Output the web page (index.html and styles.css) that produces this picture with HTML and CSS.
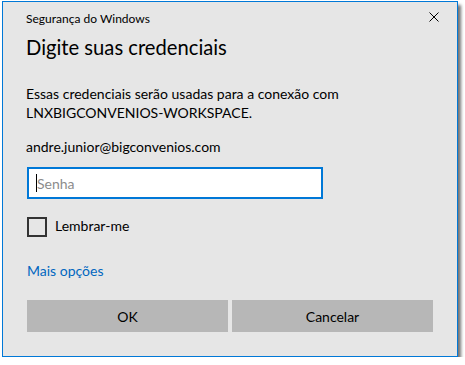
FILE: index.html
```html
<!DOCTYPE html>
<html>
  <head>
    <meta charset="utf-8">
    <link rel="stylesheet" href="styles.css">
  </head>
  <body>
    <div class="dialog">
      <div class="dialog__titlebar">
        <span class="dialog__caption">Segurança do Windows</span>
        <svg class="dialog__close" width="10" height="10" viewBox="0 0 10 10">
          <path d="M0.5 0.5 L9.5 9.5 M9.5 0.5 L0.5 9.5" stroke="#000" stroke-width="1" fill="none"/>
        </svg>
      </div>
      <div class="dialog__body">
        <h1 class="dialog__heading">Digite suas credenciais</h1>
        <p class="dialog__text">Essas credenciais serão usadas para a conexão com<br>LNXBIGCONVENIOS-WORKSPACE.</p>
        <p class="dialog__user">andre.junior@bigconvenios.com</p>
        <div class="field">
          <span class="field__caret"></span>
          <span class="field__placeholder">Senha</span>
        </div>
        <label class="check">
          <span class="check__box"></span>
          <span class="check__label">Lembrar-me</span>
        </label>
        <a class="dialog__link">Mais opções</a>
        <div class="dialog__buttons">
          <div class="button">OK</div>
          <div class="button">Cancelar</div>
        </div>
      </div>
    </div>
  </body>
</html>
```

FILE: styles.css
```css
body {
  margin: 0;
  background: #fff;
  font-family: Lato, "Noto Sans", sans-serif;
  color: #000;
}

.dialog {
  margin: 1px 0 0 2px;
  width: 454px;
  height: 354px;
  background: #e6e6e6;
  border: 1px solid #0078d7;
  box-shadow: 3px 4px 3px rgba(0,0,0,.55);
}

.dialog__titlebar {
  height: 31px;
  display: flex;
  align-items: center;
  justify-content: space-between;
  padding: 0 18px 0 23px;
}
.dialog__caption {
  font-size: 12px;
  margin-top: 1px;
}
.dialog__close {
  display: block;
  margin-top: -1px;
}

.dialog__body {
  padding: 0 24px;
}

.dialog__heading {
  margin: 0 0 0 -1px;
  font-weight: normal;
  font-size: 20.2px;
  line-height: 28px;
}

.dialog__text,
.dialog__user {
  margin: 0 0 0 -1px;
  font-size: 14px;
  line-height: 19px;
}
.dialog__text {
  margin-top: 23px;
}
.dialog__user {
  margin-top: 15px;
}

.field {
  box-sizing: border-box;
  margin-top: 11px;
  width: 296px;
  height: 32px;
  background: #fff;
  border: 2px solid #0078d7;
  display: flex;
  align-items: center;
  padding-left: 7px;
}
.field__caret {
  width: 1px;
  height: 18px;
  background: #000;
}
.field__placeholder {
  font-size: 14px;
  color: #8c8c8c;
}

.check {
  margin-top: 18px;
  height: 20px;
  display: flex;
  align-items: center;
}
.check__box {
  width: 16px;
  height: 16px;
  border: 2px solid #333;
}
.check__label {
  font-size: 14px;
  margin: 0 0 4px 8px;
}

.dialog__link {
  display: block;
  margin-top: 24px;
  font-size: 14px;
  line-height: 20px;
  color: #0067c0;
}

.dialog__buttons {
  margin-top: 19px;
  display: flex;
  gap: 4px;
}
.button {
  width: 201px;
  height: 32px;
  background: #b7b7b7;
  font-size: 14px;
  display: flex;
  align-items: center;
  justify-content: center;
}
```
